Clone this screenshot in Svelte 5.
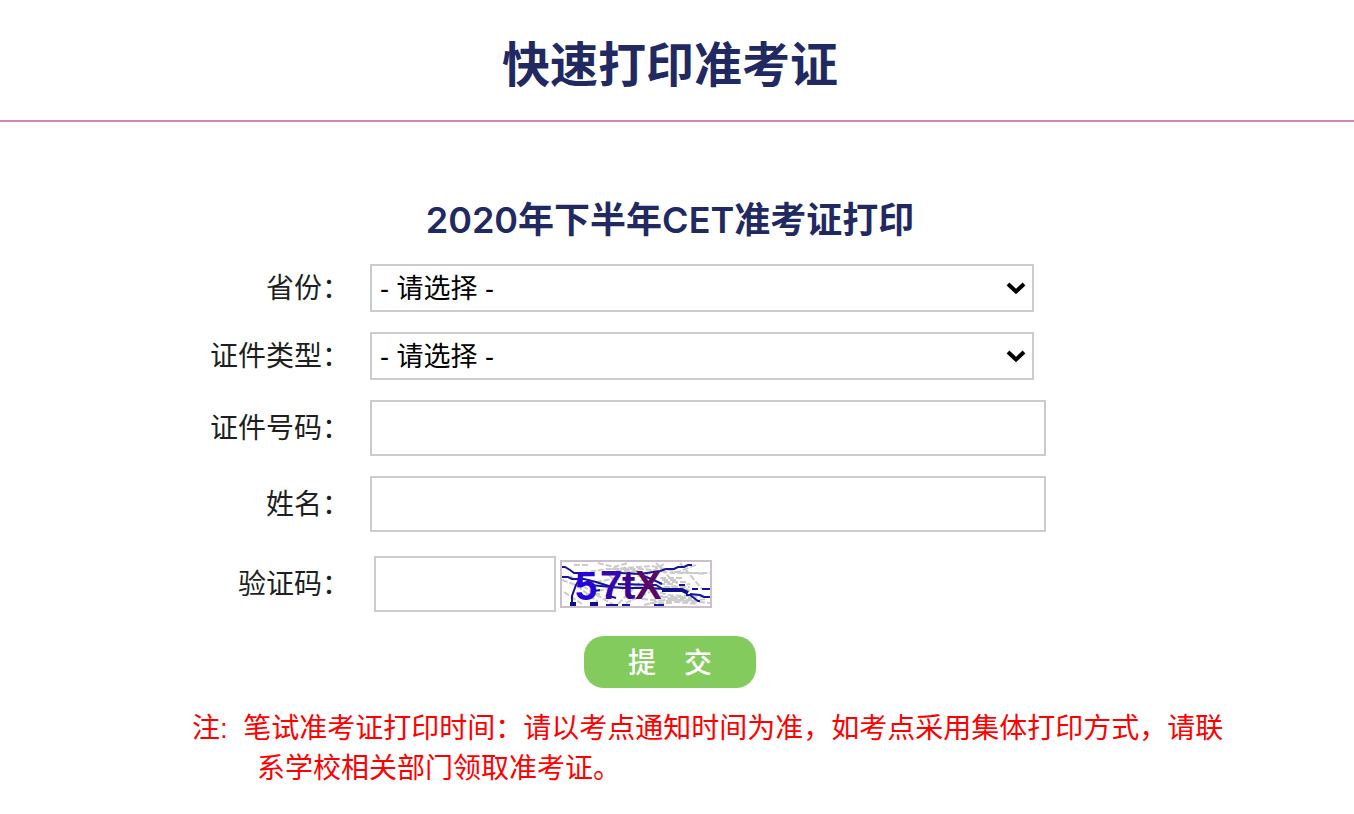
<script>
  let province = '';
  let idType = '';
  let idNumber = '';
  let name = '';
  let code = '';

  const glyphs = [
    { char: '5', x: 15, y: 40, fill: '#2404d8' },
    { char: '7', x: 40, y: 39, fill: '#3408b0' },
    { char: 't', x: 62, y: 39, fill: '#3c0494' },
    { char: 'X', x: 75, y: 39, fill: '#5a0868' },
  ];

  const greyLines = [
    'M14 5H28 M38 3L54 7L68 3 M52 9L92 6L118 12L138 4',
    'M2 20L16 25L38 42 M10 16L30 31L54 45 M22 13L46 9H84L112 13H150',
    'M96 3L112 20L130 31 M120 3L142 29 M114 12L146 14',
    'M58 44L88 14L104 4 M66 43L96 29L130 24 M38 31L72 24L108 35L148 37',
    'M84 45L108 39L150 43 M82 39L106 41L138 44 M100 36L124 42L146 39',
    'M102 20H118 M99 24H114 M104 27H130 M90 43H112 M110 40H136',
    'M4 32L22 44 M28 24L56 18 M48 14L74 40 M64 7L80 17',
    'M56 11H78 M100 18H122 M104 22H126 M102 37H124 M112 38H132 M26 34H40',
  ];

  const blueLines = [
    'M2 7H5L10 10L14 13H22 M2 17H8L12 19H24L36 22L52 27',
    'M16 13H34 M44 13H60L80 14L100 11L106 9H114L118 7H124L128 5H132',
    'M12 44V36L16 25L20 19 M46 45H58 M62 45H70 M94 45H104',
    'M30 25L62 28H90L104 29',
    'M58 24L96 25L106 31',
    'M84 16L98 22L102 24 M126 35H130L134 38L138 41H140 M130 34L140 35L144 37H150',
    'M34 31L40 30 M46 35L56 38 M20 27L30 20 M132 29H138 M142 29H150',
    'M119 25H125',
  ];
</script>

<header>
  <h1>快速打印准考证</h1>
</header>

<main>
  <form on:submit|preventDefault>
    <h2>2020年下半年CET准考证打印</h2>

    <div class="row">
      <label for="province">省份：</label>
      <div class="select">
        <select id="province" bind:value={province}>
          <option value="">- 请选择 -</option>
        </select>
        <svg class="arrow" viewBox="0 0 20 14" aria-hidden="true">
          <path d="M2 3L10 10.5L18 3" />
        </svg>
      </div>
    </div>

    <div class="row">
      <label for="id-type">证件类型：</label>
      <div class="select">
        <select id="id-type" bind:value={idType}>
          <option value="">- 请选择 -</option>
        </select>
        <svg class="arrow" viewBox="0 0 20 14" aria-hidden="true">
          <path d="M2 3L10 10.5L18 3" />
        </svg>
      </div>
    </div>

    <div class="row">
      <label for="id-number">证件号码：</label>
      <input id="id-number" type="text" bind:value={idNumber} />
    </div>

    <div class="row">
      <label for="name">姓名：</label>
      <input id="name" type="text" bind:value={name} />
    </div>

    <div class="row">
      <label for="code">验证码：</label>
      <div class="verify">
        <input id="code" type="text" bind:value={code} />
        <svg class="captcha" viewBox="0 0 152 48" role="img" aria-label="验证码">
          <rect class="paper" x="1" y="1" width="150" height="46" />
          {#each greyLines as d}
            <path class="grey" {d} />
          {/each}
          {#each blueLines as d}
            <path class="blue" {d} />
          {/each}
          <path class="thick" d="M102 30H122L128 33 M10 44H16 M30 44H38" />
          {#each glyphs as g}
            <text x={g.x} y={g.y} fill={g.fill}>{g.char}</text>
          {/each}
        </svg>
      </div>
    </div>

    <button type="submit">提　交</button>
  </form>

  <p class="note">注:&nbsp;&nbsp;笔试准考证打印时间：请以考点通知时间为准，如考点采用集体打印方式，请联系学校相关部门领取准考证。</p>
</main>

<style>
  :global(body) {
    margin: 0;
    background: #fff;
    color: #1d1f23;
    font-family: 'Liberation Sans', 'Noto Sans CJK SC', sans-serif;
    font-size: 28px;
  }
  header {
    padding: 34px 14px 22px 0;
    border-bottom: 2px solid #d582bb;
  }
  h1,
  h2 {
    margin: 0;
    color: #212963;
    text-align: center;
  }
  h1 {
    font-size: 48px;
    line-height: 64px;
  }
  h2 {
    font-family: Inter, 'Noto Sans CJK SC', sans-serif;
    font-size: 36px;
    font-weight: 600;
    line-height: 48px;
  }
  main {
    padding: 74px 14px 26px 0;
  }
  form {
    display: flex;
    flex-direction: column;
    gap: 20px;
  }
  .row {
    display: grid;
    grid-template-columns: 350px minmax(0, 676px);
    column-gap: 20px;
    align-items: center;
  }
  label {
    padding-top: 2px;
    text-align: right;
    line-height: 40px;
  }
  input,
  select {
    box-sizing: border-box;
    display: block;
    width: 100%;
    height: 56px;
    padding: 0 8px;
    border: 2px solid #ccc;
    border-radius: 0;
    background: #fff;
    color: #000;
    font-family: inherit;
    font-size: 27px;
  }
  .select {
    position: relative;
    margin-right: 12px;
  }
  select {
    height: 48px;
    padding-top: 2px;
    appearance: none;
  }
  .arrow {
    position: absolute;
    top: 17px;
    right: 8px;
    width: 20px;
    height: 14px;
    pointer-events: none;
  }
  .arrow path {
    fill: none;
    stroke: #000;
    stroke-width: 4;
  }
  .verify {
    display: flex;
    align-items: center;
    gap: 4px;
    padding: 4px;
  }
  .verify input {
    width: 182px;
  }
  .captcha {
    width: 152px;
    height: 48px;
  }
  .captcha path {
    fill: none;
  }
  .captcha text {
    font-family: 'Liberation Sans', sans-serif;
    font-size: 40px;
    font-weight: bold;
  }
  .paper {
    fill: #fff;
    stroke: #cbbfcb;
    stroke-width: 2;
  }
  .captcha .grey {
    stroke: #cbcbcb;
    stroke-width: 2;
    stroke-dasharray: 6 2;
  }
  .captcha .blue {
    stroke: #14149c;
    stroke-width: 2;
  }
  .captcha .thick {
    stroke: #10108c;
    stroke-width: 4;
  }
  button {
    align-self: center;
    width: 172px;
    height: 52px;
    padding: 0 0 2px;
    border: 0;
    border-radius: 20px;
    background: #84cb5d;
    color: #fff;
    font-family: inherit;
    font-size: 28px;
    font-weight: 500;
    cursor: pointer;
  }
  .note {
    margin: 21px 94px 0 192px;
    padding-left: 65px;
    color: #f00;
    line-height: 40px;
    text-indent: -65px;
  }
</style>
